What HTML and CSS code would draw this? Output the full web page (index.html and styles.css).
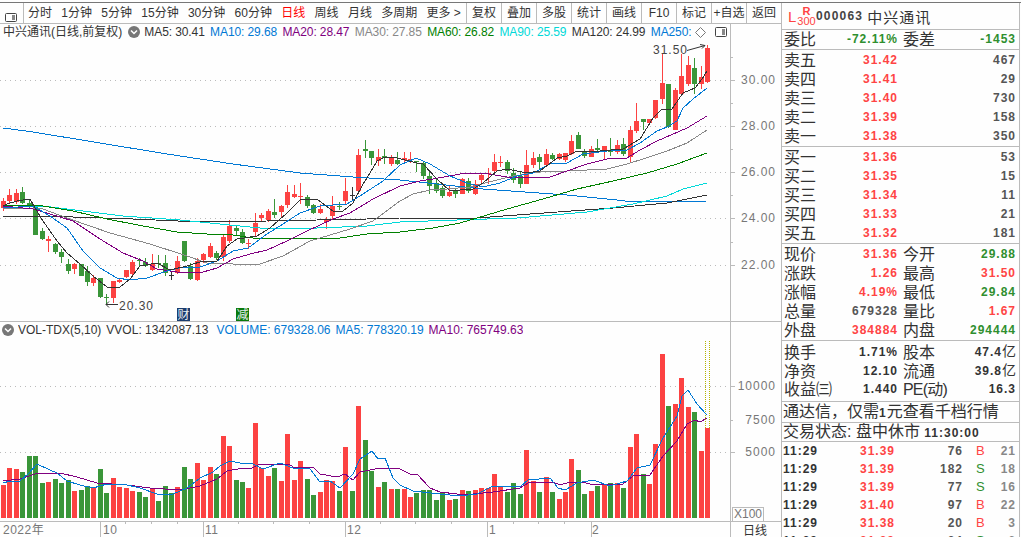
FILE: index.html
```html
<!DOCTYPE html>
<html lang="zh-CN">
<head>
  <meta charset="UTF-8">
  <title>中兴通讯 日线</title>
  <link rel="stylesheet" href="styles.css">
</head>
<body>
<div class="app">

  <!-- Left side: toolbar and both charts -->
  <div class="left">
    <div class="toolbar">
      <div class="tool-icon">
        <svg width="12" height="9" viewBox="0 0 12 9"><rect class="icon-box" x="0.5" y="0.5" width="11" height="8" rx="1"/><rect class="icon-fill" x="7" y="2" width="3" height="5"/></svg>
      </div>
      <div class="tool-group">
        <span>分时</span><span>1分钟</span><span>5分钟</span><span>15分钟</span><span>30分钟</span><span>60分钟</span>
        <span class="active">日线</span><span>周线</span><span>月线</span><span>多周期</span><span>更多 &gt;</span>
      </div>
      <div class="tool-cells">
        <span>复权</span><span>叠加</span><span>多股</span><span>统计</span><span>画线</span><span>F10</span><span>标记</span><span>+自选</span><span>返回</span>
      </div>
    </div>

    <div class="chart-head">
      <span>中兴通讯(日线,前复权)</span>
      <svg class="drop" width="12" height="12" viewBox="0 0 12 12"><circle cx="6" cy="6" r="6"/><path d="M3 4.5 L6 7.5 L9 4.5"/></svg>
      <div class="ma-list">
        <span class="c-dark">MA5: 30.41</span>
        <span class="c-blue">MA10: 29.68</span>
        <span class="c-purple">MA20: 28.47</span>
        <span class="c-gray">MA30: 27.85</span>
        <span class="c-green">MA60: 26.82</span>
        <span class="c-cyan">MA90: 25.59</span>
        <span class="c-dark">MA120: 24.99</span>
        <span class="c-blue">MA250: 24.71</span>
      </div>
      <svg class="diamond" width="11" height="11" viewBox="0 0 11 11"><path d="M5.5 0.5 L10.5 5.5 L5.5 10.5 L0.5 5.5 Z"/></svg>
      <svg class="panel-toggle" width="12" height="10" viewBox="0 0 12 10"><rect class="icon-box" x="0.5" y="0.5" width="11" height="9" rx="1"/><rect class="icon-fill" x="7" y="2" width="3" height="6"/></svg>
    </div>

    <!-- viewBox keeps the screen y so chart data can be read off directly -->
    <svg class="chart price-chart" viewBox="0 38 781 283" width="781" height="283">
      <g class="grid">
        <line x1="0" x2="730" y1="79.5" y2="79.5"/>
        <line x1="0" x2="730" y1="125.5" y2="125.5"/>
        <line x1="0" x2="730" y1="171.5" y2="171.5"/>
        <line x1="0" x2="730" y1="217.5" y2="217.5"/>
        <line x1="0" x2="730" y1="264.5" y2="264.5"/>
      </g>
      <g id="candles"></g>
      <g id="price-lines"></g>
      <g class="axis">
        <line x1="730.5" x2="730.5" y1="38" y2="320"/>
        <line x1="730" x2="735" y1="79.5" y2="79.5"/>
        <line x1="730" x2="735" y1="125.5" y2="125.5"/>
        <line x1="730" x2="735" y1="171.5" y2="171.5"/>
        <line x1="730" x2="735" y1="217.5" y2="217.5"/>
        <line x1="730" x2="735" y1="264.5" y2="264.5"/>
        <line x1="730" x2="733" y1="56.5" y2="56.5"/>
        <line x1="730" x2="733" y1="102.5" y2="102.5"/>
        <line x1="730" x2="733" y1="148.5" y2="148.5"/>
        <line x1="730" x2="733" y1="194.5" y2="194.5"/>
        <line x1="730" x2="733" y1="241.5" y2="241.5"/>
        <line x1="0" x2="781" y1="320.5" y2="320.5"/>
      </g>
      <g class="axis-text">
        <text x="776" y="83">30.00</text>
        <text x="776" y="129">28.00</text>
        <text x="776" y="175">26.00</text>
        <text x="776" y="221">24.00</text>
        <text x="776" y="268">22.00</text>
      </g>
      <text class="mark-text" x="653" y="53">31.50</text>
      <path class="mark-line" d="M687 49.5 L705 44.5 M700 43.5 L705 44.5 L702 47.5"/>
      <text class="mark-text" x="119" y="309">20.30</text>
      <path class="mark-line" d="M118 303.5 L106 303.5 M109 300.5 L106 303.5 L109 306.5"/>
      <rect class="badge-cai" x="177" y="307" width="13" height="13"/>
      <text class="badge-text" x="177.5" y="318">财</text>
      <rect class="badge-jian" x="236" y="307" width="13" height="13"/>
      <text class="badge-text" x="236.5" y="318">减</text>
    </svg>

    <div class="chart-head vol-head">
      <svg class="drop" width="12" height="12" viewBox="0 0 12 12"><circle cx="6" cy="6" r="6"/><path d="M3 4.5 L6 7.5 L9 4.5"/></svg>
      <div class="ma-list">
        <span class="c-dark">VOL-TDX(5,10)</span>
        <span class="c-dark">VVOL: 1342087.13</span>
        <span class="c-blue vol-first">VOLUME: 679328.06</span>
        <span class="c-blue">MA5: 778320.19</span>
        <span class="c-purple">MA10: 765749.63</span>
      </div>
    </div>

    <svg class="chart vol-chart" viewBox="0 337 781 200" width="781" height="200">
      <g class="grid">
        <line x1="0" x2="730" y1="385.5" y2="385.5"/>
        <line x1="0" x2="730" y1="451.5" y2="451.5"/>
      </g>
      <g id="volumes"></g>
      <path class="last-marker" d="M705.5 340 V427 M709.5 340 V427"/>
      <g id="volume-lines"></g>
      <g class="axis">
        <line x1="730.5" x2="730.5" y1="337" y2="537"/>
        <line x1="730" x2="735" y1="385.5" y2="385.5"/>
        <line x1="730" x2="733" y1="419.5" y2="419.5"/>
        <line x1="730" x2="735" y1="451.5" y2="451.5"/>
        <line x1="0" x2="781" y1="520.5" y2="520.5"/>
        <line x1="0" x2="781" y1="536.5" y2="536.5"/>
        <path d="M100.5 521 V536 M203.5 521 V536 M345.5 521 V536 M487.5 521 V536 M591.5 521 V536"/>
        <path d="M125.5 521 V523 M151.5 521 V523 M177.5 521 V523 M238.5 521 V523 M273.5 521 V523 M309.5 521 V523 M380.5 521 V523 M415.5 521 V523 M451.5 521 V523 M513.5 521 V523 M538.5 521 V523 M564.5 521 V523"/>
        <rect x="732.5" y="506" width="31" height="14"/>
      </g>
      <g class="axis-text">
        <text x="776" y="389">10000</text>
        <text x="776" y="423">7500</text>
        <text x="776" y="455">5000</text>
      </g>
      <text class="x100" x="734" y="517">X100</text>
      <g class="date-text">
        <text x="3" y="533">2022年</text>
        <text x="103" y="533">10</text>
        <text x="205" y="533">11</text>
        <text x="347" y="533">12</text>
        <text x="489" y="533">1</text>
        <text x="592" y="533">2</text>
      </g>
      <text class="period-text" x="743" y="534">日线</text>
    </svg>
  </div>

  <!-- Right side: quote panel -->
  <div class="quote">
    <div class="q-title">
      <span class="q-l">L</span>
      <span class="q-r"><b>R</b><i>300</i></span>
      <span class="q-code">000063</span>
      <span class="q-name">中兴通讯</span>
    </div>

    <div class="q-sec q-ratio">
      <div class="q-row"><span>委比</span><b class="green">-72.11%</b><span>委差</span><b class="green">-1453</b></div>
    </div>

    <div class="q-sec">
      <div class="q-row"><span>卖五</span><b class="red">31.42</b><i></i><b class="gray">467</b></div>
      <div class="q-row"><span>卖四</span><b class="red">31.41</b><i></i><b class="gray">29</b></div>
      <div class="q-row"><span>卖三</span><b class="red">31.40</b><i></i><b class="gray">730</b></div>
      <div class="q-row"><span>卖二</span><b class="red">31.39</b><i></i><b class="gray">158</b></div>
      <div class="q-row"><span>卖一</span><b class="red">31.38</b><i></i><b class="gray">350</b></div>
    </div>

    <div class="q-sec">
      <div class="q-row"><span>买一</span><b class="red">31.36</b><i></i><b class="gray">53</b></div>
      <div class="q-row"><span>买二</span><b class="red">31.35</b><i></i><b class="gray">15</b></div>
      <div class="q-row"><span>买三</span><b class="red">31.34</b><i></i><b class="gray">11</b></div>
      <div class="q-row"><span>买四</span><b class="red">31.33</b><i></i><b class="gray">21</b></div>
      <div class="q-row"><span>买五</span><b class="red">31.32</b><i></i><b class="gray">181</b></div>
    </div>

    <div class="q-sec">
      <div class="q-row"><span>现价</span><b class="red">31.36</b><span>今开</span><b class="green">29.88</b></div>
      <div class="q-row"><span>涨跌</span><b class="red">1.26</b><span>最高</span><b class="red">31.50</b></div>
      <div class="q-row"><span>涨幅</span><b class="red">4.19%</b><span>最低</span><b class="green">29.84</b></div>
      <div class="q-row"><span>总量</span><b class="gray">679328</b><span>量比</span><b class="red">1.67</b></div>
      <div class="q-row"><span>外盘</span><b class="red">384884</b><span>内盘</span><b class="green">294444</b></div>
    </div>

    <div class="q-sec q-extra">
      <div class="q-row"><span>换手</span><b>1.71%</b><span>股本</span><b>47.4<em>亿</em></b></div>
      <div class="q-row"><span>净资</span><b>12.10</b><span>流通</span><b>39.8<em>亿</em></b></div>
      <div class="q-row"><span>收益㈢</span><b>1.440</b><span class="q-pe">PE(动)</span><b>16.3</b></div>
    </div>

    <div class="q-line q-ad">通达信，仅需<b>1</b>元查看千档行情</div>
    <div class="q-line q-state">交易状态: 盘中休市 <b>11:30:00</b></div>

    <div class="q-ticks">
      <div class="t-row"><b>11:29</b><b class="red">31.39</b><b class="gray">76</b><span class="red">B</span><b class="light">21</b></div>
      <div class="t-row"><b>11:29</b><b class="red">31.39</b><b class="gray">182</b><span class="green">S</span><b class="light">18</b></div>
      <div class="t-row"><b>11:29</b><b class="red">31.39</b><b class="gray">77</b><span class="green">S</span><b class="light">16</b></div>
      <div class="t-row"><b>11:29</b><b class="red">31.40</b><b class="gray">97</b><span class="red">B</span><b class="light">22</b></div>
      <div class="t-row"><b>11:29</b><b class="red">31.38</b><b class="gray">20</b><span class="red">B</span><b class="light">3</b></div>
      <div class="t-row"><b>11:29</b><b class="red">31.39</b><b class="gray">24</b><span class="green">S</span><b class="light">6</b></div>
    </div>
  </div>
</div>
<script src="chart.js"></script>
</body>
</html>
```

FILE: styles.css
```css
/* General page */
* {
  box-sizing: border-box;
}

body {
  margin: 0;
  background-color: #fefefe;
  color: #333;
  font-family: "Liberation Sans", "Noto Sans CJK SC", sans-serif;
  font-size: 12px;
  overflow: hidden;
}

.app {
  display: flex;
  width: 1021px;
  height: 535px;
  margin-top: 2px;
  border-top: 1px solid #777;
  overflow: hidden;
}

.left {
  width: 781px;
  flex: none;
}

/* Toolbar */
.toolbar {
  display: flex;
  align-items: stretch;
  height: 21px;
  border-bottom: 1px solid #bbb;
  line-height: 21px;
}

.tool-icon {
  width: 24px;
  padding: 5px 0 0 5px;
  border-right: 1px solid #bbb;
}

.icon-box {
  fill: #fff;
  stroke: #444;
}

.icon-fill {
  fill: #888;
}

.tool-group {
  display: flex;
  gap: 9.3px;
  width: 442px;
  padding-left: 4px;
  white-space: nowrap;
}

.tool-group .active {
  color: #f00;
}

.tool-cells {
  display: flex;
  flex: 1;
  border-left: 1px solid #bbb;
}

.tool-cells span {
  flex: 1;
  text-align: center;
  border-right: 1px solid #bbb;
  white-space: nowrap;
}

.tool-cells span:last-child {
  border-right: none;
}

/* Chart header rows */
.chart-head {
  display: flex;
  align-items: center;
  gap: 4px;
  width: 731px;
  height: 15px;
  padding: 1px 3px 0;
  border-right: 1px solid #bbb;
  white-space: nowrap;
  line-height: 14px;
  overflow: hidden;
}

.ma-list {
  display: flex;
  gap: 5.4px;
  width: 553px;
  overflow: hidden;
  letter-spacing: -0.1px;
}

.drop {
  flex: none;
  margin-left: 2px;
}

.drop circle {
  fill: #777;
}

.drop path {
  fill: none;
  stroke: #fff;
  stroke-width: 1.5;
}

.diamond {
  flex: none;
}

.diamond path {
  fill: #fff;
  stroke: #777;
}

.panel-toggle {
  flex: none;
  margin-left: 5px;
}

.vol-head {
  height: 16px;
  padding: 0 3px 1px 0;
}

.vol-head .ma-list {
  gap: 5px;
  width: auto;
  letter-spacing: 0;
}

.vol-first {
  margin-left: 3px;
}

.c-dark { color: #333; }
.c-blue { color: #0078d4; }
.c-purple { color: #800080; }
.c-gray { color: #888; }
.c-green { color: #008000; }
.c-cyan { color: #00d8d8; }

/* Charts */
.chart {
  display: block;
  font-family: "Liberation Sans", "Noto Sans CJK SC", sans-serif;
  font-size: 12px;
}

.grid line {
  stroke: #bbb;
  stroke-dasharray: 1 4;
}

.axis line,
.axis path,
.axis rect {
  stroke: #bbb;
  fill: none;
  shape-rendering: crispEdges;
}

.axis-text text {
  fill: #777;
  text-anchor: end;
  letter-spacing: 1px;
}

.mark-text {
  fill: #444;
  letter-spacing: 1px;
}

.mark-line {
  fill: none;
  stroke: #333;
}

.badge-cai {
  fill: #1a3c6e;
}

.badge-jian {
  fill: #0a7a0a;
}

.badge-text {
  fill: #e8eef0;
}

.last-marker {
  fill: none;
  stroke: #b5b500;
  stroke-dasharray: 1 1;
}

.x100 {
  fill: #777;
}

.date-text text {
  fill: #777;
  letter-spacing: 0.5px;
}

.period-text {
  fill: #333;
}

.up {
  fill: #fc4242;
}

.down {
  fill: #3a9639;
}

.dark {
  fill: #333;
}

.candle rect,
.vol-bar {
  shape-rendering: crispEdges;
}

.ma {
  fill: none;
  stroke-width: 1;
  shape-rendering: crispEdges;
}

.ma-5 { stroke: #333; }
.ma-10 { stroke: #0078d4; }
.ma-20 { stroke: #800080; }
.ma-30 { stroke: #888; }
.ma-60 { stroke: #008000; }
.ma-90 { stroke: #00d8d8; }
.ma-120 { stroke: #333; }
.ma-250 { stroke: #0078d4; }

/* Quote panel */
.quote {
  width: 239px;
  flex: none;
  border-left: 1px solid #bbb;
  border-right: 1px solid #bbb;
  overflow: hidden;
}

.q-title {
  display: flex;
  align-items: center;
  height: 27px;
  padding-left: 6px;
  border-bottom: 1px solid #bbb;
}

.q-l {
  width: 11px;
  color: #f44;
  font-size: 15px;
}

.q-r {
  display: flex;
  flex-direction: column;
  align-items: center;
  width: 15px;
  color: #f44;
  font-size: 11px;
  line-height: 10px;
}

.q-r i {
  font-style: normal;
}

.q-code {
  margin-left: 2px;
  font-weight: bold;
  color: #444;
  letter-spacing: 1.2px;
}

.q-name {
  margin-left: 4px;
  font-size: 15px;
  letter-spacing: 1px;
}

.q-sec {
  height: 97px;
  padding-top: 1px;
  border-bottom: 1px solid #bbb;
}

.q-ratio {
  height: 20px;
  padding-top: 0;
}

.q-extra {
  height: 61px;
}

.q-row {
  display: grid;
  grid-template-columns: 32px 82px 37px 81px;
  align-items: center;
  height: 19px;
  padding-left: 2px;
  line-height: 19px;
  white-space: nowrap;
}

.q-row span {
  font-size: 16px;
}

.q-row span:nth-child(3) {
  padding-left: 5px;
}

.q-row .q-pe {
  letter-spacing: -0.8px;
}

.q-row b {
  text-align: right;
  letter-spacing: 1px;
}

.q-row em {
  font-size: 14px;
  font-style: normal;
  font-weight: normal;
  letter-spacing: 0;
}

.q-line {
  padding-left: 1px;
  border-bottom: 1px solid #bbb;
  font-size: 16px;
  white-space: nowrap;
}

.q-line b {
  font-size: 12px;
  letter-spacing: 1px;
}

.q-ad {
  height: 21px;
  line-height: 20px;
}

.q-state {
  height: 19px;
  line-height: 18px;
}

.t-row {
  display: grid;
  grid-template-columns: 40px 72px 68px 21px 32px;
  height: 18px;
  padding-left: 1px;
  line-height: 18px;
  font-size: 12px;
}

.t-row b {
  letter-spacing: 1px;
  text-align: right;
}

.t-row b:first-child {
  text-align: left;
}

.t-row span {
  padding-left: 13px;
  font-size: 13px;
}

/* Shared text colours */
.red { color: #f44; }
.green { color: #2f8f2f; }
.gray { color: #555; }
.light { color: #888; }
```

FILE: chart.js
```js
// candle rows: body top, body bottom, wick top, wick bottom, volume bar height, colour
const rows = [
  [200,207,197,210,33,'r'],[194,200,188,202,50,'r'],[192,201,188,203,49,'r'],[191,202,186,203,46,'g'],
  [202,205,198,207,62,'g'],[205,234,205,234,62,'g'],[230,238,227,239,35,'g'],[238,240,235,251,36,'r'],
  [243,251,242,253,39,'g'],[251,256,248,262,35,'g'],[263,270,258,273,38,'g'],[263,268,262,273,27,'r'],
  [263,275,263,275,28,'g'],[270,281,265,285,32,'g'],[277,282,274,285,31,'r'],[277,296,277,297,49,'g'],
  [296,297,293,303,25,'g'],[280,297,280,302,40,'r'],[279,281,277,282,31,'r'],[269,276,269,277,30,'r'],
  [261,273,259,274,27,'r'],[259,260,257,265,26,'g'],[261,265,257,266,21,'g'],[263,269,253,270,29,'r'],
  [262,263,254,267,17,'g'],[262,272,254,275,32,'g'],[274,275,270,279,25,'k'],[260,272,255,273,31,'r'],
  [240,260,240,261,51,'g'],[265,278,262,279,39,'g'],[260,279,257,280,55,'r'],[253,259,252,262,38,'r'],
  [245,256,242,257,51,'r'],[252,257,250,259,44,'g'],[236,256,233,260,82,'r'],[225,240,219,242,72,'r'],
  [227,230,225,235,38,'g'],[231,242,228,243,36,'g'],[242,243,238,248,30,'r'],[222,231,212,235,95,'r'],
  [214,217,212,220,50,'r'],[210,219,208,221,42,'r'],[211,214,198,217,50,'g'],[205,211,204,217,37,'r'],
  [191,204,184,207,84,'r'],[193,196,184,197,38,'r'],[195,196,182,203,57,'r'],[196,205,194,207,39,'g'],
  [204,212,203,213,23,'g'],[208,212,203,213,26,'r'],[219,221,216,228,38,'r'],[205,215,195,218,37,'r'],
  [205,206,201,209,27,'g'],[190,200,177,203,71,'r'],[194,195,186,200,27,'k'],[154,190,148,190,112,'r'],
  [148,150,139,157,78,'g'],[150,157,150,164,47,'g'],[156,160,148,165,31,'r'],[155,157,148,163,36,'g'],
  [157,163,154,165,29,'r'],[159,163,151,164,29,'g'],[157,159,151,163,29,'r'],[158,159,151,162,21,'r'],
  [160,161,160,171,25,'g'],[162,175,161,178,28,'g'],[175,185,170,193,28,'g'],[182,190,177,192,18,'g'],
  [187,195,185,197,25,'g'],[191,195,184,196,18,'r'],[190,193,187,197,19,'g'],[178,193,177,193,28,'r'],
  [180,190,177,192,27,'g'],[183,193,179,194,28,'r'],[174,179,172,183,30,'r'],[172,173,167,183,30,'r'],
  [161,170,153,172,44,'r'],[161,162,155,166,32,'r'],[161,170,159,173,26,'g'],[172,179,167,182,35,'g'],
  [175,183,170,187,24,'g'],[164,183,149,183,68,'r'],[157,164,151,167,37,'r'],[156,161,153,168,26,'g'],
  [153,164,148,164,41,'r'],[154,158,152,159,26,'g'],[153,158,152,159,19,'r'],[152,159,152,161,26,'r'],
  [140,153,134,154,59,'r'],[134,148,131,148,48,'g'],[151,155,148,157,24,'g'],[148,156,145,156,27,'r'],
  [147,149,138,152,32,'g'],[145,151,145,158,34,'r'],[149,151,137,155,35,'g'],[144,151,139,153,35,'r'],
  [143,153,137,155,30,'g'],[129,156,125,161,71,'r'],[120,130,102,132,84,'r'],[118,121,118,129,44,'g'],
  [118,122,118,123,34,'r'],[99,117,99,118,74,'r'],[82,98,53,103,164,'r'],[83,126,83,127,112,'g'],
  [89,129,87,129,114,'r'],[75,93,53,95,140,'r'],[64,83,55,85,111,'r'],[67,83,57,93,106,'g'],
  [76,83,65,88,67,'r'],[47,81,44,82,90,'r']
];

const VOL_BASE = 517;
const STEP = 6.46;
const colourClass = { r: 'up', g: 'down', k: 'dark' };

function barX(i) {
  return Math.round(1 + STEP * i);
}

function polyline(cls, points) {
  return `<polyline class="ma ${cls}" points="${points}"/>`;
}

const priceLines = {
  'ma-250': '3,127 33,131 100,142 167,153 233,163 300,172 353,176 400,179 483,188 567,194 617,199 633,201 707,200',
  'ma-120': '3,215 43,215 133,218 200,221 267,220 367,218 400,217 477,217 530,213 613,207 667,202 707,194',
  'ma-90': '3,207 43,205 83,210 123,215 180,219 220,223 260,227 317,227 367,225 400,221 457,219 517,217 587,211 633,203 667,195 683,188 707,182',
  'ma-60': '3,204 43,205 73,210 107,218 143,225 177,231 207,233 233,234 253,237 340,237 367,233 400,231 433,227 460,222 477,217 507,208 543,198 577,188 613,180 647,172 677,163 707,152',
  'ma-30': '3,207 43,208 67,217 110,232 150,243 187,255 207,262 233,263 260,263 283,255 310,240 350,228 373,220 400,200 413,193 430,189 447,188 470,186 493,180 513,175 540,171 567,170 607,168 627,163 643,158 667,150 687,142 707,129',
  'ma-20': '3,205 33,208 50,213 73,220 100,238 123,252 143,260 157,268 177,271 203,271 217,267 233,258 250,253 267,249 287,240 307,230 333,218 350,212 373,198 400,185 420,180 433,178 460,173 483,172 507,176 540,177 550,176 567,170 587,163 607,158 627,157 640,149 657,140 687,127 707,115',
  'ma-10': '3,207 33,205 50,215 67,227 83,250 100,267 117,277 130,279 147,277 167,270 183,266 200,266 217,260 233,250 248,247 267,233 283,223 300,212 320,205 347,203 363,193 383,180 400,164 416,157 430,163 450,175 467,182 483,186 500,182 517,175 533,172 550,163 567,162 583,153 607,150 627,149 640,142 657,130 667,126 677,120 683,107 693,98 707,87',
  'ma-5': '3,205 7,203 17,200 30,198 35,207 43,220 57,240 67,252 80,263 93,275 107,286 120,286 130,278 140,265 157,262 170,269 187,265 203,260 217,260 227,245 237,238 257,235 270,227 287,212 300,199 317,198 333,210 343,210 353,202 363,183 367,177 377,160 385,156 397,157 417,162 423,163 437,178 450,190 460,189 473,188 483,182 497,170 507,168 527,172 540,170 557,157 567,155 577,150 600,150 623,148 640,138 653,117 662,108 672,108 683,92 695,87 702,78 707,70'
};

const volumeLines = {
  'ma-20': '3,480 20,478 35,473 60,472 77,476 97,482 127,484 150,487 180,489 200,485 217,478 227,470 243,467 250,468 260,463 290,464 295,467 313,466 320,473 337,476 345,473 353,479 360,471 380,467 400,468 410,473 417,473 430,487 440,491 457,493 473,493 493,491 520,487 528,482 553,481 560,484 570,481 583,481 593,484 623,483 633,475 650,474 663,455 677,440 687,423 695,419 700,421 707,417',
  'ma-10': '3,482 10,480 20,480 28,473 37,463 50,469 57,472 67,480 80,484 93,487 107,483 123,483 140,487 157,493 173,493 187,487 200,477 213,471 220,465 230,460 240,462 253,463 263,468 280,462 293,467 310,468 320,481 330,480 340,487 353,473 360,458 372,450 378,458 385,457 393,477 400,484 413,490 440,493 460,495 477,493 493,485 520,486 528,479 550,477 558,487 565,489 577,482 593,479 610,485 627,480 637,467 650,464 663,437 677,415 682,395 688,389 697,403 707,414'
};

let candleHtml = '';
let volumeHtml = '';

rows.forEach((r, i) => {
  const x = barX(i);
  const cls = colourClass[r[5]];
  const bodyH = Math.max(r[1] - r[0], 1);
  candleHtml += `<g class="candle ${cls}">` +
    `<rect x="${x + 2}" y="${r[2]}" width="1" height="${r[3] - r[2]}"/>` +
    `<rect x="${x}" y="${r[0]}" width="5" height="${bodyH}"/></g>`;
  // the dark doji days still count as falling days on the volume pane
  const volCls = r[5] === 'r' ? 'up' : 'down';
  volumeHtml += `<rect class="vol-bar ${volCls}" x="${x}" y="${VOL_BASE - r[4]}" width="5" height="${r[4]}"/>`;
});

document.getElementById('candles').innerHTML = candleHtml;
document.getElementById('volumes').innerHTML = volumeHtml;
document.getElementById('price-lines').innerHTML =
  Object.keys(priceLines).map((k) => polyline(k, priceLines[k])).join('');
document.getElementById('volume-lines').innerHTML =
  Object.keys(volumeLines).map((k) => polyline(k, volumeLines[k])).join('');
```
